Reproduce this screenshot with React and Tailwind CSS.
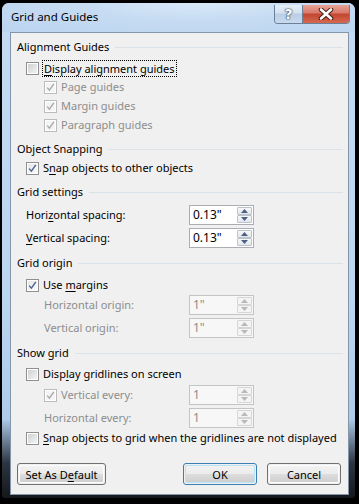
import React from "react";

const FONT = "font-['Segoe_UI','Noto_Sans',sans-serif]";

function Check({ checked, disabled }) {
  return (
    <span
      className={`w-[13px] h-[13px] shrink-0 border ${
        disabled ? "border-[#bcbcbc]" : "border-[#8e8f8f]"
      } bg-white p-[1px] flex`}
    >
      <span
        className={`flex-1 flex items-center justify-center ${
          disabled
            ? "bg-[#f4f4f4]"
            : checked
            ? "bg-gradient-to-br from-[#e6e6e6] to-[#fbfbfb]"
            : "bg-gradient-to-br from-[#cfd1d4] to-[#f3f3f3]"
        }`}
      >
        {checked && (
          <svg width="9" height="9" viewBox="0 0 9 9">
            <path
              d="M1.2 4.6 L3.4 7.2 L7.8 0.8"
              stroke={disabled ? "#a9a9a9" : "#4a5f97"}
              strokeWidth="1.4"
              fill="none"
            />
          </svg>
        )}
      </span>
    </span>
  );
}

function Arrow({ up, disabled }) {
  return (
    <svg width="7" height="4" viewBox="0 0 7 4">
      <path
        d={up ? "M0 4 L3.5 0 L7 4 Z" : "M0 0 L3.5 4 L7 0 Z"}
        fill={disabled ? "#b9b9b9" : "#4d6185"}
      />
    </svg>
  );
}

function Spin({ value, disabled }) {
  return (
    <div
      className={`w-[65px] h-[20px] border ${
        disabled ? "border-[#c4c4c4] bg-[#f7f7f7]" : "border-[#abadb3] bg-white"
      } flex`}
    >
      <span
        className={`flex-1 pl-[3px] leading-[18px] text-[12px] ${
          disabled ? "text-[#8d8d8d]" : "text-black"
        }`}
      >
        {value}
      </span>
      <div className="w-[16px] flex flex-col py-[1px] pr-[1px]">
        <div
          className={`h-[8px] flex-1 border rounded-[1px] ${
            disabled ? "border-[#d6d6d6] bg-[#f4f4f4]" : "border-[#bcc3cc] bg-gradient-to-b from-[#f7f8fa] to-[#e3e7ec]"
          } flex items-center justify-center`}
        >
          <Arrow up disabled={disabled} />
        </div>
        <div
          className={`h-[8px] flex-1 border rounded-[1px] ${
            disabled ? "border-[#d6d6d6] bg-[#f4f4f4]" : "border-[#bcc3cc] bg-gradient-to-b from-[#f7f8fa] to-[#e3e7ec]"
          } flex items-center justify-center`}
        >
          <Arrow disabled={disabled} />
        </div>
      </div>
    </div>
  );
}

function Heading({ children, mt }) {
  return (
    <div className={`flex items-center h-[20px] pl-[6px] pr-[5px] ${mt}`}>
      <span className="text-black">{children}</span>
      <div className="flex-1 h-px bg-[#dbe3e9] ml-[6px]" />
    </div>
  );
}

function Button({ children, w, primary }) {
  return (
    <div
      className={`${w} h-[22px] rounded-[3px] border ${
        primary ? "border-[#3c7fb1]" : "border-[#707070]"
      } p-px`}
    >
      <div
        className={`h-full rounded-[2px] border ${
          primary ? "border-[#b8e3f8]" : "border-[#fcfcfc]"
        } bg-[linear-gradient(to_bottom,#f2f2f2_0%,#ebebeb_50%,#dddddd_51%,#cfcfcf_100%)] flex items-center justify-center text-black leading-none`}
      >
        {children}
      </div>
    </div>
  );
}

const U = ({ children }) => <span className="underline underline-offset-[2px]">{children}</span>;

export default function App() {
  return (
    <div className={`w-[359px] h-[504px] bg-black pl-[2px] pt-[3px] ${FONT} text-[11px] text-black whitespace-nowrap`}>
      <div className="w-[353px] h-[495px] rounded-t-[7px] rounded-b-[3px] bg-[linear-gradient(to_bottom,#c3daf2_0%,#bcd5f0_60%,#aecbe9_84%,#2c3440_93%,#15181c_100%)] flex flex-col">
        {/* title bar */}
        <div className="h-[29px] flex items-start rounded-t-[7px] bg-[radial-gradient(ellipse_at_55%_0%,#d9e9f9_0%,#c5dbf2_45%,#bbd4ef_100%)]">
          <div className="pl-[9px] h-[28px] flex items-center text-black text-[11.5px]">Grid and Guides</div>
          <div className="ml-auto mr-[5px] mt-[2px] flex h-[19px] rounded-b-[4px] border border-t-0 border-[#6b7f97] overflow-hidden">
            <div className="w-[28px] h-full bg-[linear-gradient(to_bottom,#e5eef8_0%,#d3e1f0_45%,#b9cde4_50%,#c9daec_100%)] border-r border-[#6b7f97] flex items-center justify-center">
              <span className="text-white font-bold text-[14px] leading-none font-['DejaVu_Sans',sans-serif] [text-shadow:0_0_1px_#3b4a5c,0_0_1px_#3b4a5c,0_0_2px_#3b4a5c]">?</span>
            </div>
            <div className="w-[46px] h-full bg-[linear-gradient(to_bottom,#e8a496_0%,#d8786a_45%,#c2452f_50%,#d6694f_100%)] flex items-center justify-center">
              <svg width="16" height="12" viewBox="0 0 16 12">
                <path d="M3 1.5 L13 10.5 M13 1.5 L3 10.5" stroke="#4a1c14" strokeWidth="4.6" strokeLinecap="round" />
                <path d="M3 1.5 L13 10.5 M13 1.5 L3 10.5" stroke="#ffffff" strokeWidth="2.6" strokeLinecap="round" />
              </svg>
            </div>
          </div>
        </div>

        {/* content */}
        <div className="ml-[8px] mr-[5px] w-[339px] h-[463px] border border-[#8295ab] bg-[#f0f0f0] flex flex-col">
          <Heading mt="mt-[4px]">Alignment Guides</Heading>
          <div className="h-[20px] mt-[1px] flex items-center pl-[15px]">
            <Check />
            <span className="ml-[3px] px-[1px] border border-dotted border-black leading-[15px]">
              <U>D</U>isplay alignment guides
            </span>
          </div>
          <div className="h-[19px] flex items-center pl-[33px] text-[#8d8d8d]">
            <Check checked disabled />
            <span className="ml-[4px]">Page guides</span>
          </div>
          <div className="h-[19px] flex items-center pl-[33px] text-[#8d8d8d]">
            <Check checked disabled />
            <span className="ml-[4px]">Margin guides</span>
          </div>
          <div className="h-[19px] flex items-center pl-[33px] text-[#8d8d8d]">
            <Check checked disabled />
            <span className="ml-[4px]">Paragraph guides</span>
          </div>

          <Heading mt="mt-[4px]">Object Snapping</Heading>
          <div className="h-[19px] flex items-center pl-[15px]">
            <Check checked />
            <span className="ml-[4px]">
              S<U>n</U>ap objects to other objects
            </span>
          </div>

          <Heading mt="mt-[4px]">Grid settings</Heading>
          <div className="h-[20px] mt-[3px] flex items-center">
            <div className="w-[178px] pl-[15px]">
              Hori<U>z</U>ontal spacing:
            </div>
            <Spin value={'0.13"'} />
          </div>
          <div className="h-[20px] mt-[3px] flex items-center">
            <div className="w-[178px] pl-[15px]">
              <U>V</U>ertical spacing:
            </div>
            <Spin value={'0.13"'} />
          </div>

          <Heading mt="mt-[5px]">Grid origin</Heading>
          <div className="h-[20px] mt-[2px] flex items-center pl-[15px]">
            <Check checked />
            <span className="ml-[4px]">
              Use <U>m</U>argins
            </span>
          </div>
          <div className="h-[20px] flex items-center">
            <div className="w-[178px] pl-[33px] text-[#8d8d8d]">Horizontal origin:</div>
            <Spin value={'1"'} disabled />
          </div>
          <div className="h-[20px] mt-[3px] flex items-center">
            <div className="w-[178px] pl-[33px] text-[#8d8d8d]">Vertical origin:</div>
            <Spin value={'1"'} disabled />
          </div>

          <Heading mt="mt-[5px]">Show grid</Heading>
          <div className="h-[20px] mt-[1px] flex items-center pl-[15px]">
            <Check />
            <span className="ml-[4px]">
              Disp<U>l</U>ay gridlines on screen
            </span>
          </div>
          <div className="h-[20px] mt-[1px] flex items-center">
            <div className="w-[178px] pl-[33px] flex items-center text-[#8d8d8d]">
              <Check checked disabled />
              <span className="ml-[4px]">Vertical every:</span>
            </div>
            <Spin value="1" disabled />
          </div>
          <div className="h-[20px] mt-[3px] flex items-center">
            <div className="w-[178px] pl-[33px] text-[#8d8d8d]">Horizontal every:</div>
            <Spin value="1" disabled />
          </div>
          <div className="h-[20px] flex items-center pl-[15px]">
            <Check />
            <span className="ml-[4px]">
              <U>S</U>nap objects to grid when the gridlines are not displayed
            </span>
          </div>

          <div className="mt-[15px] flex items-center pl-[6px] pr-[7px]">
            <Button w="w-[89px]">
              <span>
                Set As D<U>e</U>fault
              </span>
            </Button>
            <div className="ml-auto flex gap-[10px]">
              <Button w="w-[74px]" primary>
                OK
              </Button>
              <Button w="w-[74px]">Cancel</Button>
            </div>
          </div>
        </div>
      </div>
    </div>
  );
}
